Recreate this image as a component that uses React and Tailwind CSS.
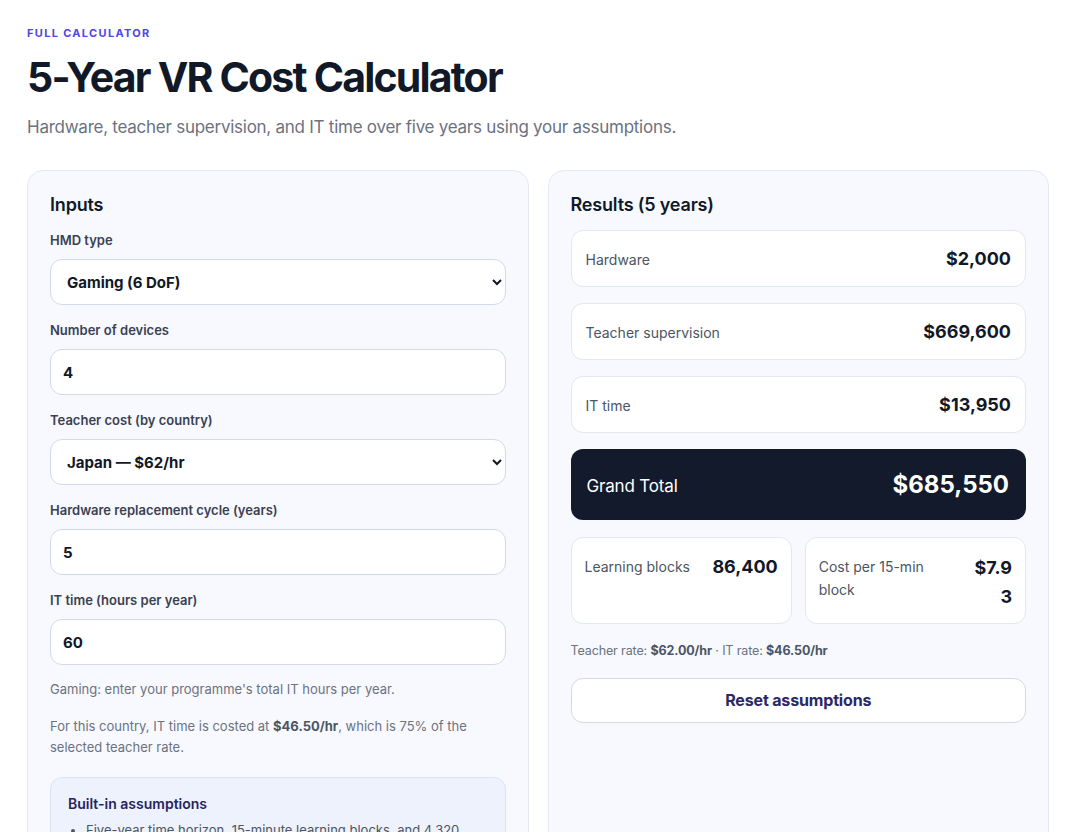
import React, { useState } from 'react';

const Field = ({ label, children }) => (
  <div>
    <label className="block text-[13px] font-semibold text-[#3a4152] mb-[10px] leading-[18px]">{label}</label>
    {children}
  </div>
);

const inputCls = "w-full h-[46px] rounded-xl border border-[#d3d9e8] bg-white text-[15px] font-bold text-[#111827] focus:outline-none";

const ResultRow = ({ label, value }) => (
  <div className="h-[57px] rounded-xl border border-[#e2e7f1] bg-white px-[14px] flex items-center justify-between">
    <span className="text-[14px] text-[#4b5563] pt-[2px]">{label}</span>
    <span className="text-[18px] font-bold text-[#111827]">{value}</span>
  </div>
);

export default function App() {
  const [hmd, setHmd] = useState('gaming');
  const [devices, setDevices] = useState('4');
  const [country, setCountry] = useState('japan');
  const [cycle, setCycle] = useState('5');
  const [itHours, setItHours] = useState('60');

  return (
    <div className="min-h-screen bg-white px-[27px] pt-[25px] text-[#111827]" style={{ fontFamily: 'Inter, "Noto Sans", sans-serif' }}>
      <div className="text-[11px] font-bold tracking-[0.12em] text-[#4f46e5]">FULL CALCULATOR</div>
      <h1 className="mt-[11px] text-[41px] leading-[48px] font-bold tracking-[-0.044em] text-[#111827]">5-Year VR Cost Calculator</h1>
      <p className="mt-[14px] text-[17px] text-[#6b7280] tracking-[-0.015em]">Hardware, teacher supervision, and IT time over five years using your assumptions.</p>

      <div className="mt-[30px] grid grid-cols-2 gap-[19px]">
        {/* Inputs */}
        <div className="rounded-2xl border border-[#e3e8f2] bg-[#f7f9fe] px-[22px] pt-[22px] pb-8">
          <h2 className="text-[18px] font-semibold leading-[24px] tracking-[-0.01em] mb-[14px]">Inputs</h2>
          <div className="space-y-[16px]">
            <Field label="HMD type">
              <select value={hmd} onChange={(e) => setHmd(e.target.value)} className={`${inputCls} pl-[12px] pr-[10px]`}>
                <option value="gaming">Gaming (6 DoF)</option>
                <option value="edu">Education (3 DoF)</option>
              </select>
            </Field>
            <Field label="Number of devices">
              <input type="text" value={devices} onChange={(e) => setDevices(e.target.value)} className={`${inputCls} px-[12px]`} />
            </Field>
            <Field label="Teacher cost (by country)">
              <select value={country} onChange={(e) => setCountry(e.target.value)} className={`${inputCls} pl-[12px] pr-[10px]`}>
                <option value="japan">Japan — $62/hr</option>
                <option value="uk">United Kingdom — $48/hr</option>
              </select>
            </Field>
            <Field label="Hardware replacement cycle (years)">
              <input type="text" value={cycle} onChange={(e) => setCycle(e.target.value)} className={`${inputCls} px-[12px]`} />
            </Field>
            <Field label="IT time (hours per year)">
              <input type="text" value={itHours} onChange={(e) => setItHours(e.target.value)} className={`${inputCls} px-[12px]`} />
            </Field>
          </div>
          <p className="mt-[14px] text-[13px] leading-[21px] text-[#6b7280]">Gaming: enter your programme's total IT hours per year.</p>
          <p className="mt-[16px] text-[13px] leading-[21px] text-[#6b7280]">
            For this country, IT time is costed at <b className="text-[#4b5563]">$46.50/hr</b>, which is 75% of the selected teacher rate.
          </p>
          <div className="mt-[19px] rounded-xl border border-[#dbe4f6] bg-[#edf2fd] px-[17px] pt-[15px] pb-4">
            <h3 className="text-[14px] font-semibold text-[#27245e]">Built-in assumptions</h3>
            <ul className="mt-[6px] list-disc pl-[18px] text-[13px] leading-[21px] text-[#4b5563] space-y-1">
              <li>Five-year time horizon, 15-minute learning blocks, and 4,320 blocks per device per year.</li>
              <li>Each learning block is supervised by one teacher.</li>
            </ul>
          </div>
        </div>

        {/* Results */}
        <div className="rounded-2xl border border-[#e3e8f2] bg-[#f7f9fe] px-[22px] pt-[22px] pb-8">
          <h2 className="text-[18px] font-semibold leading-[24px] tracking-[-0.01em] mb-[13px]">Results (5 years)</h2>
          <div className="space-y-[16px]">
            <ResultRow label="Hardware" value="$2,000" />
            <ResultRow label="Teacher supervision" value="$669,600" />
            <ResultRow label="IT time" value="$13,950" />
            <div className="h-[71px] rounded-xl bg-[#131a2b] pl-[16px] pr-[17px] flex items-center justify-between">
              <span className="text-[17px] text-white pt-[4px] tracking-[-0.01em]">Grand Total</span>
              <span className="text-[24px] font-bold text-white">$685,550</span>
            </div>
          </div>
          <div className="mt-[17px] grid grid-cols-2 gap-[13px]">
            <div className="h-[87px] rounded-xl border border-[#e2e7f1] bg-white px-[13px] pt-[15px] flex justify-between gap-2">
              <span className="text-[14px] leading-[23px] text-[#4b5563] pt-[2px]">Learning blocks</span>
              <span className="text-[18px] font-bold leading-[28px]">86,400</span>
            </div>
            <div className="h-[87px] rounded-xl border border-[#e2e7f1] bg-white px-[13px] pt-[15px] flex justify-between gap-2">
              <span className="text-[14px] leading-[23px] text-[#4b5563] pt-[2px] w-[120px]">Cost per 15-min block</span>
              <span className="text-[18px] font-bold leading-[29px] text-right w-[40px] break-all">$7.93</span>
            </div>
          </div>
          <p className="mt-[18px] text-[12.5px] text-[#6b7280] tracking-[-0.01em]">
            Teacher rate: <b className="text-[#4b5563]">$62.00/hr</b> · IT rate: <b className="text-[#4b5563]">$46.50/hr</b>
          </p>
          <button className="mt-[17px] w-full h-[45px] rounded-xl border border-[#d3d9e8] bg-white text-[16px] font-bold text-[#2b2866] tracking-[-0.01em]">
            Reset assumptions
          </button>
        </div>
      </div>
    </div>
  );
}
